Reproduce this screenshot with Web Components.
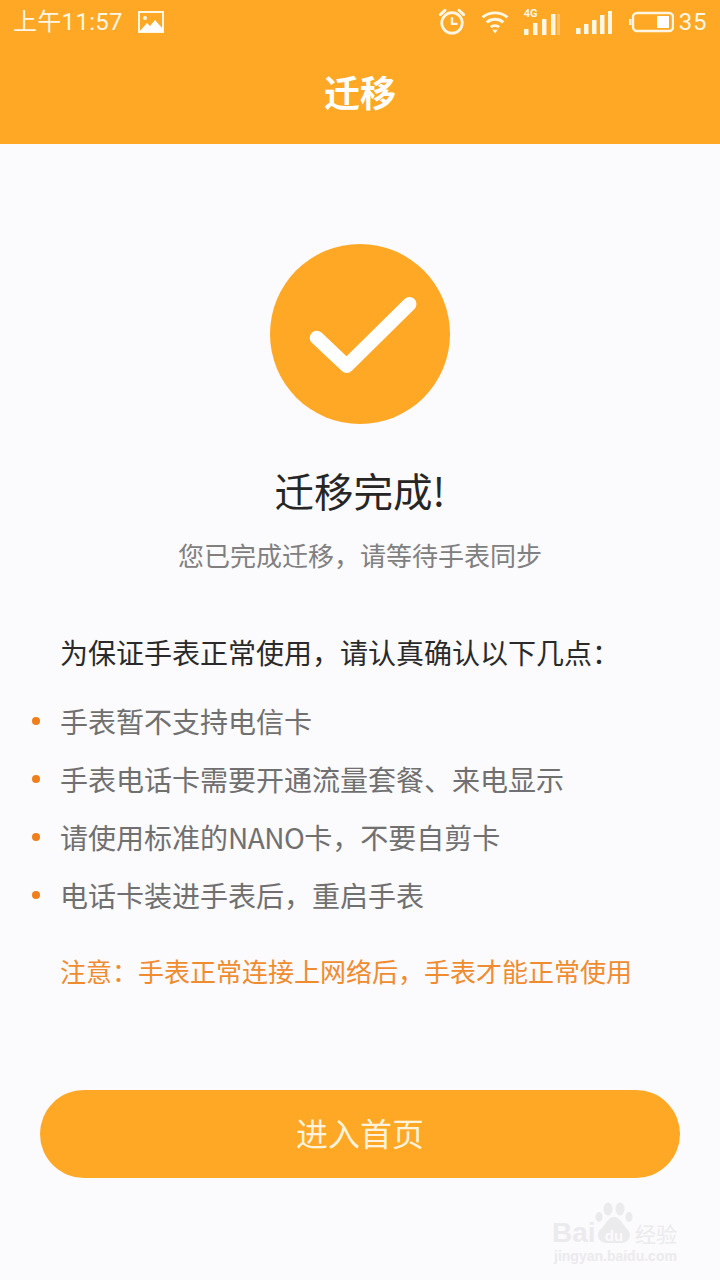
<!DOCTYPE html>
<html lang="zh">
<head>
<meta charset="utf-8">
<title>迁移</title>
<style>
  html, body { margin: 0; padding: 0; background: #fbfafc; }
  body { width: 720px; height: 1280px; overflow: hidden; font-family: "Noto Sans CJK SC", "Roboto", sans-serif; }
</style>
</head>
<body>
<app-page>
  <app-header title="迁移"></app-header>
  <done-badge></done-badge>
  <done-message heading="迁移完成!" sub="您已完成迁移，请等待手表同步"></done-message>
  <notice-list heading="为保证手表正常使用，请认真确认以下几点：" note="注意：手表正常连接上网络后，手表才能正常使用">
    <notice-item>手表暂不支持电信卡</notice-item>
    <notice-item>手表电话卡需要开通流量套餐、来电显示</notice-item>
    <notice-item>请使用标准的<span style="letter-spacing:-.5px">NANO</span>卡，不要自剪卡</notice-item>
    <notice-item>电话卡装进手表后，重启手表</notice-item>
  </notice-list>
  <big-button>进入首页</big-button>
  <baidu-mark></baidu-mark>
</app-page>
<script>
// the page itself, just a column
class AppPage extends HTMLElement {
  connectedCallback() {
    const shadow = this.attachShadow({mode: "open"});
    shadow.innerHTML = `<style>
      :host { display: flex; flex-direction: column; position: relative; width: 720px; height: 1280px; background: #fbfafc; }
    </style><slot></slot>`;
  }
}
customElements.define("app-page", AppPage);

// orange bar with status icons and the title
class AppHeader extends HTMLElement {
  connectedCallback() {
    const shadow = this.attachShadow({mode: "open"});
    shadow.innerHTML = `<style>
      :host { display: block; height: 144px; background: #ffa826; color: #fff; }
      .status { display: flex; align-items: center; height: 44px; padding: 0 13px 0 13px; box-sizing: border-box; color: #fff6e4; }
      .time { font: 400 24px/44px "Roboto", "Noto Sans CJK SC", sans-serif; letter-spacing: .3px; }
      .gap { flex: 1; }
      svg { display: block; flex: none; }
      .pic { margin-left: 15px; }
      .alarm { margin-right: 15px; }
      .wifi { margin-right: 15px; }
      .sig4g { margin-right: 16px; }
      .sig { margin-right: 17px; }
      .num { font: 400 24px/44px "Roboto", sans-serif; margin-left: 5px; letter-spacing: .6px; }
      h1 { margin: 0; height: 100px; box-sizing: border-box; text-align: center; font: 700 36px/96px "Noto Sans CJK SC", sans-serif; position: relative; top: -1px; }
    </style>
    <div class="status">
      <span class="time">上午11:57</span>
      <svg class="pic" width="26" height="22" viewBox="0 0 26 22"><rect x="1" y="1" width="24" height="20" fill="none" stroke="#fff6e4" stroke-width="2"/><circle cx="7" cy="7" r="2" fill="#fff6e4"/><path d="M1 21 L9 12 L12 15 L17 9 L25 18 V21 Z" fill="#fff"/></svg>
      <span class="gap"></span>
      <svg class="alarm" width="28" height="28" viewBox="0 0 30 30" fill="none" stroke="#fff6e4"><circle cx="15" cy="16" r="11" stroke-width="3"/><path d="M15 10 V17 H21" stroke-width="2.600"/><path d="M2.500 7 L7.500 2.500 M27.500 7 L22.500 2.500" stroke-width="3.200" stroke-linecap="round"/></svg>
      <svg class="wifi" width="28" height="24" viewBox="0 0 30 26" fill="none" stroke="#fff6e4" stroke-width="3.200"><path d="M1.500 8 C9 1.500 21 1.500 28.500 8"/><path d="M6 13.500 C11 9 19 9 24 13.500"/><path d="M10.500 18.500 C13 16.500 17 16.500 19.500 18.500"/><path d="M15 25.500 L12 21.500 H18 Z" fill="#fff6e4" stroke="none"/></svg>
      <span class="sig4g" style="position:relative;display:block;width:36px;height:28px">
        <span style="position:absolute;left:0;top:0;font:700 11px/12px 'Roboto',sans-serif;color:#fff6e4">4G</span>
        <svg width="36" height="28" viewBox="0 0 36 28" fill="#fff6e4"><rect x="0" y="21" width="4.500" height="6"/><rect x="9" y="15" width="4.500" height="12"/><rect x="18" y="11" width="4.500" height="16"/><rect x="27" y="6" width="4.500" height="21"/><rect x="33" y="6" width="3" height="21" fill="#ffc164"/></svg>
      </span>
      <svg class="sig" width="36" height="26" viewBox="0 0 36 26" fill="#fff6e4"><rect x="0" y="19" width="4.500" height="6"/><rect x="8" y="15" width="4.500" height="10"/><rect x="16" y="11" width="4.500" height="14"/><rect x="24" y="6" width="4.500" height="19"/><rect x="32" y="2" width="4.500" height="23"/></svg>
      <svg width="45" height="24" viewBox="0 0 45 24" fill="none"><rect x="4" y="3" width="40" height="18" rx="4" stroke="#fff6e4" stroke-width="2.400"/><rect x="0" y="9" width="2.500" height="6" fill="#fff6e4"/><rect x="28" y="6" width="12" height="12" fill="#fff"/></svg>
      <span class="num">35</span>
    </div>
    <h1>${this.getAttribute("title")}</h1>`;
  }
}
customElements.define("app-header", AppHeader);

// big circle with the tick
class DoneBadge extends HTMLElement {
  connectedCallback() {
    const shadow = this.attachShadow({mode: "open"});
    shadow.innerHTML = `<style>
      :host { display: block; width: 180px; height: 180px; margin: 100px auto 0; }
      svg { display: block; }
    </style>
    <svg width="180" height="180" viewBox="0 0 180 180"><circle cx="90" cy="90" r="90" fill="#ffa826"/><path d="M46.700 93.700 L76.700 122 L139.500 60" fill="none" stroke="#fff" stroke-width="14" stroke-linecap="round" stroke-linejoin="round"/></svg>`;
  }
}
customElements.define("done-badge", DoneBadge);

class DoneMessage extends HTMLElement {
  connectedCallback() {
    const shadow = this.attachShadow({mode: "open"});
    shadow.innerHTML = `<style>
      :host { display: block; text-align: center; margin-top: 36px; }
      h2 { margin: 0; font: 400 39.500px/60px "Noto Sans CJK SC", sans-serif; color: #262626; }
      p { margin: 15px 0 0; font: 400 26px/40px "Noto Sans CJK SC", sans-serif; color: #808080; }
    </style>
    <h2>${this.getAttribute("heading")}</h2>
    <p>${this.getAttribute("sub")}</p>`;
  }
}
customElements.define("done-message", DoneMessage);

// list of things to check, heading + items + orange note
class NoticeList extends HTMLElement {
  connectedCallback() {
    const shadow = this.attachShadow({mode: "open"});
    shadow.innerHTML = `<style>
      :host { display: block; margin-top: 56px; padding-left: 60px; }
      h3 { margin: 0 0 27px; font: 400 28px/42px "Noto Sans CJK SC", sans-serif; color: #2a2a2a; }
      .items { display: flex; flex-direction: column; gap: 16px; }
      p { margin: 35px 0 0; font: 400 26px/40px "Noto Sans CJK SC", sans-serif; color: #f08c30; }
    </style>
    <h3>${this.getAttribute("heading")}</h3>
    <div class="items"><slot></slot></div>
    <p>${this.getAttribute("note")}</p>`;
  }
}
customElements.define("notice-list", NoticeList);

class NoticeItem extends HTMLElement {
  connectedCallback() {
    const shadow = this.attachShadow({mode: "open"});
    shadow.innerHTML = `<style>
      :host { display: block; position: relative; font: 400 28px/42px "Noto Sans CJK SC", "Liberation Sans", sans-serif; color: #707070; }
      .dot { position: absolute; left: -28px; top: 17px; width: 8px; height: 8px; border-radius: 50%; background: #ee7f1c; }
    </style><span class="dot"></span><slot></slot>`;
  }
}
customElements.define("notice-item", NoticeItem);

class BigButton extends HTMLElement {
  connectedCallback() {
    const shadow = this.attachShadow({mode: "open"});
    shadow.innerHTML = `<style>
      :host { display: flex; align-items: center; justify-content: center; height: 88px; margin: 99px 40px 0; border-radius: 44px; background: #ffa826; color: #fff3dc; font: 400 32px/84px "Noto Sans CJK SC", sans-serif; letter-spacing: 0; }
      span { display: block; height: 84px; margin-bottom: 4px; }
    </style><span><slot></slot></span>`;
  }
}
customElements.define("big-button", BigButton);

// faint baidu watermark sitting over the bottom corner
class BaiduMark extends HTMLElement {
  connectedCallback() {
    const shadow = this.attachShadow({mode: "open"});
    shadow.innerHTML = `<style>
      :host { display: block; position: absolute; left: 552px; top: 1202px; width: 130px; height: 66px; color: #ebeaed; }
      .bai { position: absolute; left: 0; top: 15px; font: 700 28px/32px "Liberation Sans", sans-serif; letter-spacing: 0; }
      .du { position: absolute; left: 47px; top: 26px; width: 30px; text-align: center; font: 700 15px/16px "Liberation Sans", sans-serif; color: #fbfafc; }
      .jing { position: absolute; left: 83px; top: 17px; font: 400 21px/28px "Noto Sans CJK SC", sans-serif; white-space: nowrap; }
      .url { position: absolute; left: 2px; top: 45px; font: 700 14px/18px "Liberation Sans", sans-serif; white-space: nowrap; }
      svg { position: absolute; left: 43px; top: 0; }
    </style>
    <svg width="38" height="42" viewBox="0 0 38 42" fill="#ebeaed"><ellipse cx="13" cy="7" rx="4.500" ry="6.500"/><ellipse cx="25" cy="7" rx="4.500" ry="6.500"/><ellipse cx="4" cy="15" rx="3.500" ry="5"/><ellipse cx="34" cy="15" rx="3.500" ry="5"/><path d="M19 15 C25 15 27 22 33 28 C38 34 33 41 26 41 H12 C5 41 0 34 5 28 C11 22 13 15 19 15 Z"/></svg>
    <span class="bai">Bai</span><span class="du">du</span><span class="jing">经验</span>
    <span class="url">jingyan.baidu.com</span>`;
  }
}
customElements.define("baidu-mark", BaiduMark);
</script>
</body>
</html>
